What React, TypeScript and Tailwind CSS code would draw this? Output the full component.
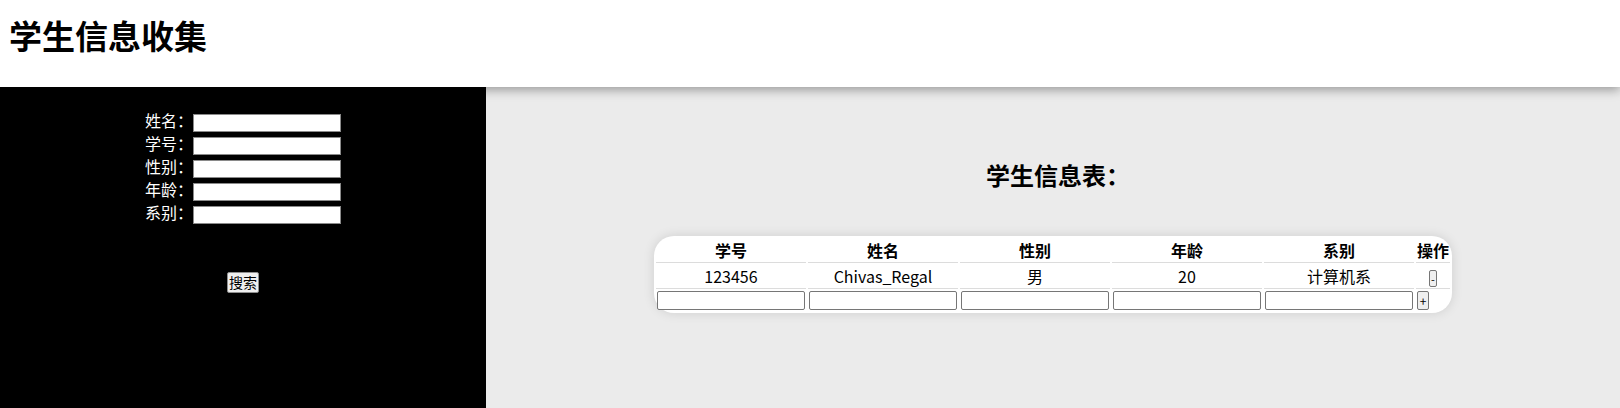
const students = [
  { id: "123456", name: "Chivas_Regal", gender: "男", age: "20", dept: "计算机系" },
];

const headers = ["学号", "姓名", "性别", "年龄", "系别"];
const formFields = ["姓名", "学号", "性别", "年龄", "系别"];

const font = "font-['Noto_Sans_CJK_SC','Noto_Sans',sans-serif]";

export default function App() {
  return (
    <div className={`w-[1620px] h-[408px] overflow-hidden bg-white ${font}`}>
      {/* Header */}
      <header className="relative z-10 h-[87px] bg-white pl-[9px] shadow-[0_3px_10px_rgba(0,0,0,0.35)]">
        <h1 className="text-[33px] font-bold leading-[70px] text-black">学生信息收集</h1>
      </header>

      <div className="flex h-[321px]">
        {/* Search form */}
        <aside className="relative z-20 w-[486px] bg-black pt-[22px] text-center text-white">
          {formFields.map((f) => (
            <div key={f} className="h-[23px] text-[16px] leading-[23px]">
              <span>{f}：</span>
              <input className="h-[18px] w-[148px] border border-[#8a8a8a] bg-white align-middle" />
            </div>
          ))}
          <div className="mt-[48px] flex justify-center">
            <button className="h-[21px] rounded-[2px] border border-[#8f8f8f] bg-[#efefef] px-px text-[14px] leading-[19px] text-black">
              搜索
            </button>
          </div>
        </aside>

        {/* Table */}
        <main className="flex flex-1 flex-col items-center bg-[#ebebeb] pt-[72px]">
          <h2 className="ml-[10px] text-[24px] font-bold leading-[32px] text-black">学生信息表：</h2>
          <table className="mt-[45px] border-separate border-spacing-[2px] rounded-[20px] bg-white text-[16px] text-black shadow-[0_0_12px_rgba(0,0,0,0.12)]">
            <thead>
              <tr>
                {headers.map((h) => (
                  <th key={h} className="w-[150px] border-b border-[#dcdcdc] p-px font-bold leading-[22px]">
                    {h}
                  </th>
                ))}
                <th className="border-b border-[#dcdcdc] p-px font-bold leading-[22px]">操作</th>
              </tr>
            </thead>
            <tbody>
              {students.map((s) => (
                <tr key={s.id}>
                  {[s.id, s.name, s.gender, s.age, s.dept].map((v, i) => (
                    <td key={i} className="border-b border-[#dcdcdc] p-px text-center leading-[21px]">
                      {v}
                    </td>
                  ))}
                  <td className="border-b border-[#dcdcdc] p-px text-center leading-[21px]">
                    <button className="h-[17px] w-[8px] rounded-[2px] border border-[#767676] bg-[#efefef] p-0 align-middle text-[11px] leading-[14px]">
                      -
                    </button>
                  </td>
                </tr>
              ))}
              <tr>
                {headers.map((h) => (
                  <td key={h} className="px-px pt-0 pb-px leading-none">
                    <input className="block h-[19px] w-[148px] rounded-[2px] border border-[#767676] bg-white" />
                  </td>
                ))}
                <td className="px-px pt-0 pb-px text-left leading-none">
                  <button className="block h-[19px] w-[12px] rounded-[2px] border border-[#767676] bg-[#efefef] p-0 text-[12px] leading-[16px]">
                    +
                  </button>
                </td>
              </tr>
            </tbody>
          </table>
        </main>
      </div>
    </div>
  );
}
